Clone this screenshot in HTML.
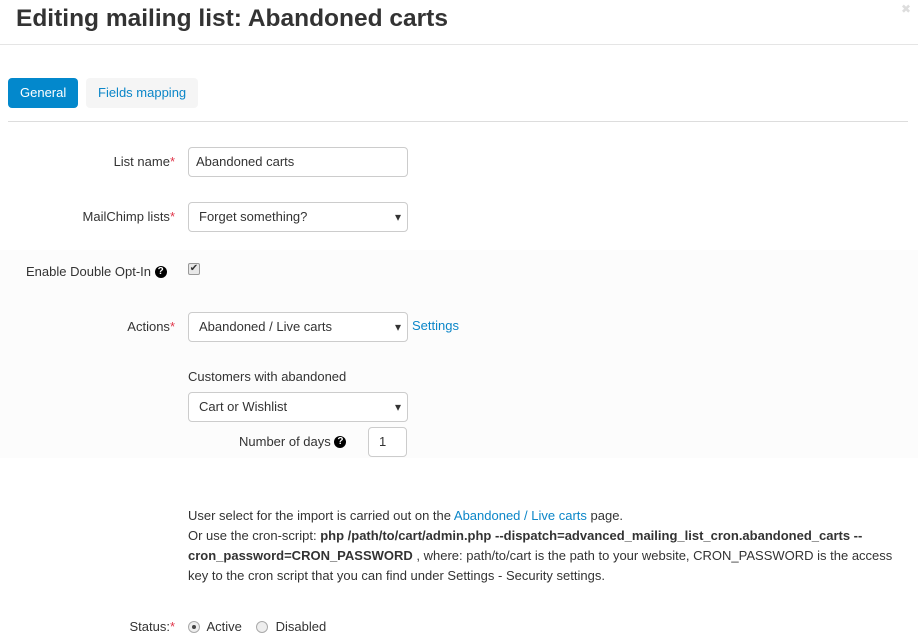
<!DOCTYPE html>
<html><head><meta charset="utf-8"><style>
*{box-sizing:border-box}
body{margin:0;width:918px;height:643px;overflow:hidden;background:#fff;font-family:"Liberation Sans",sans-serif;font-size:13px;color:#333;position:relative}
.a{position:absolute}
h1{position:absolute;left:16px;top:5px;margin:0;font-size:24.5px;font-weight:bold;color:#333;line-height:28px}
.close{left:901px;top:2px;color:#ddd;font-size:12px}
.hr1{left:0;top:44px;width:918px;height:1px;background:#e5e5e5}
.hr2{left:8px;top:121px;width:900px;height:1px;background:#ddd}
.btn{height:30px;line-height:30px;border-radius:4px;padding:0 12px;font-size:13px}
.gray{left:0;top:250px;width:918px;height:208px;background:#fcfcfc}
.lbl{text-align:right;width:175px;left:0}
.req{color:#e0364a}
.inp{border:1px solid #ccc;border-radius:4px;background:#fff;height:30px;line-height:28px;padding:0 10px;font-size:13px}
.sel:after{content:"▾";position:absolute;right:6px;top:0;font-size:12px;color:#333}
.q{display:inline-block;width:12px;height:12px;border-radius:50%;background:#000;color:#fff;font-size:10px;line-height:12px;text-align:center;font-weight:bold;vertical-align:-1px;position:relative;top:-1px}
a{color:#0b86c8;text-decoration:none}
.radio{display:inline-block;width:12px;height:12px;border-radius:50%;border:1px solid #aaa;background:#eee;vertical-align:-2px;position:relative}
</style></head><body>
<h1>Editing mailing list: Abandoned carts</h1>
<div class="a close">✖</div>
<div class="a hr1"></div>
<div class="a btn" style="left:8px;top:78px;background:#0388cc;color:#fff">General</div>
<div class="a btn" style="left:86px;top:78px;background:#f5f5f5;color:#0b86c8">Fields mapping</div>
<div class="a hr2"></div>

<div class="a lbl" style="top:154px">List name<span class="req">*</span></div>
<div class="a inp" style="left:188px;top:147px;width:220px;padding-left:7px">Abandoned carts</div>

<div class="a lbl" style="top:209px">MailChimp lists<span class="req">*</span></div>
<div class="a inp sel" style="left:188px;top:202px;width:220px">Forget something?</div>

<div class="a gray"></div>
<div class="a" style="left:26px;top:264px">Enable Double Opt-In <span class="q" style="top:-3px">?</span></div>
<div class="a" style="left:188px;top:263px;width:12px;height:12px;border:1px solid #999;border-radius:2px;background:#e8e8e8;font-size:10px;line-height:10px;text-align:center">✔</div>

<div class="a lbl" style="top:319px">Actions<span class="req">*</span></div>
<div class="a inp sel" style="left:188px;top:312px;width:220px">Abandoned / Live carts</div>
<div class="a" style="left:412px;top:318px"><a>Settings</a></div>

<div class="a" style="left:188px;top:369px">Customers with abandoned</div>
<div class="a inp sel" style="left:188px;top:392px;width:220px">Cart or Wishlist</div>
<div class="a" style="left:239px;top:434px">Number of days <span class="q" style="top:-3px">?</span></div>
<div class="a inp" style="left:368px;top:427px;width:39px">1</div>

<div class="a" style="left:188px;top:506px;width:715px;line-height:20px">User select for the import is carried out on the <a>Abandoned / Live carts</a> page.<br>Or use the cron-script: <b>php /path/to/cart/admin.php --dispatch=advanced_mailing_list_cron.abandoned_carts --cron_password=CRON_PASSWORD</b> , where: path/to/cart is the path to your website, CRON_PASSWORD is the access key to the cron script that you can find under Settings - Security settings.</div>

<div class="a lbl" style="top:619px">Status:<span class="req">*</span></div>
<div class="a" style="left:188px;top:619px"><span class="radio"><span style="position:absolute;left:3px;top:3px;width:4px;height:4px;border-radius:50%;background:#444"></span></span>&nbsp; Active &nbsp; &nbsp;<span class="radio"></span>&nbsp; Disabled</div>
</body></html>
